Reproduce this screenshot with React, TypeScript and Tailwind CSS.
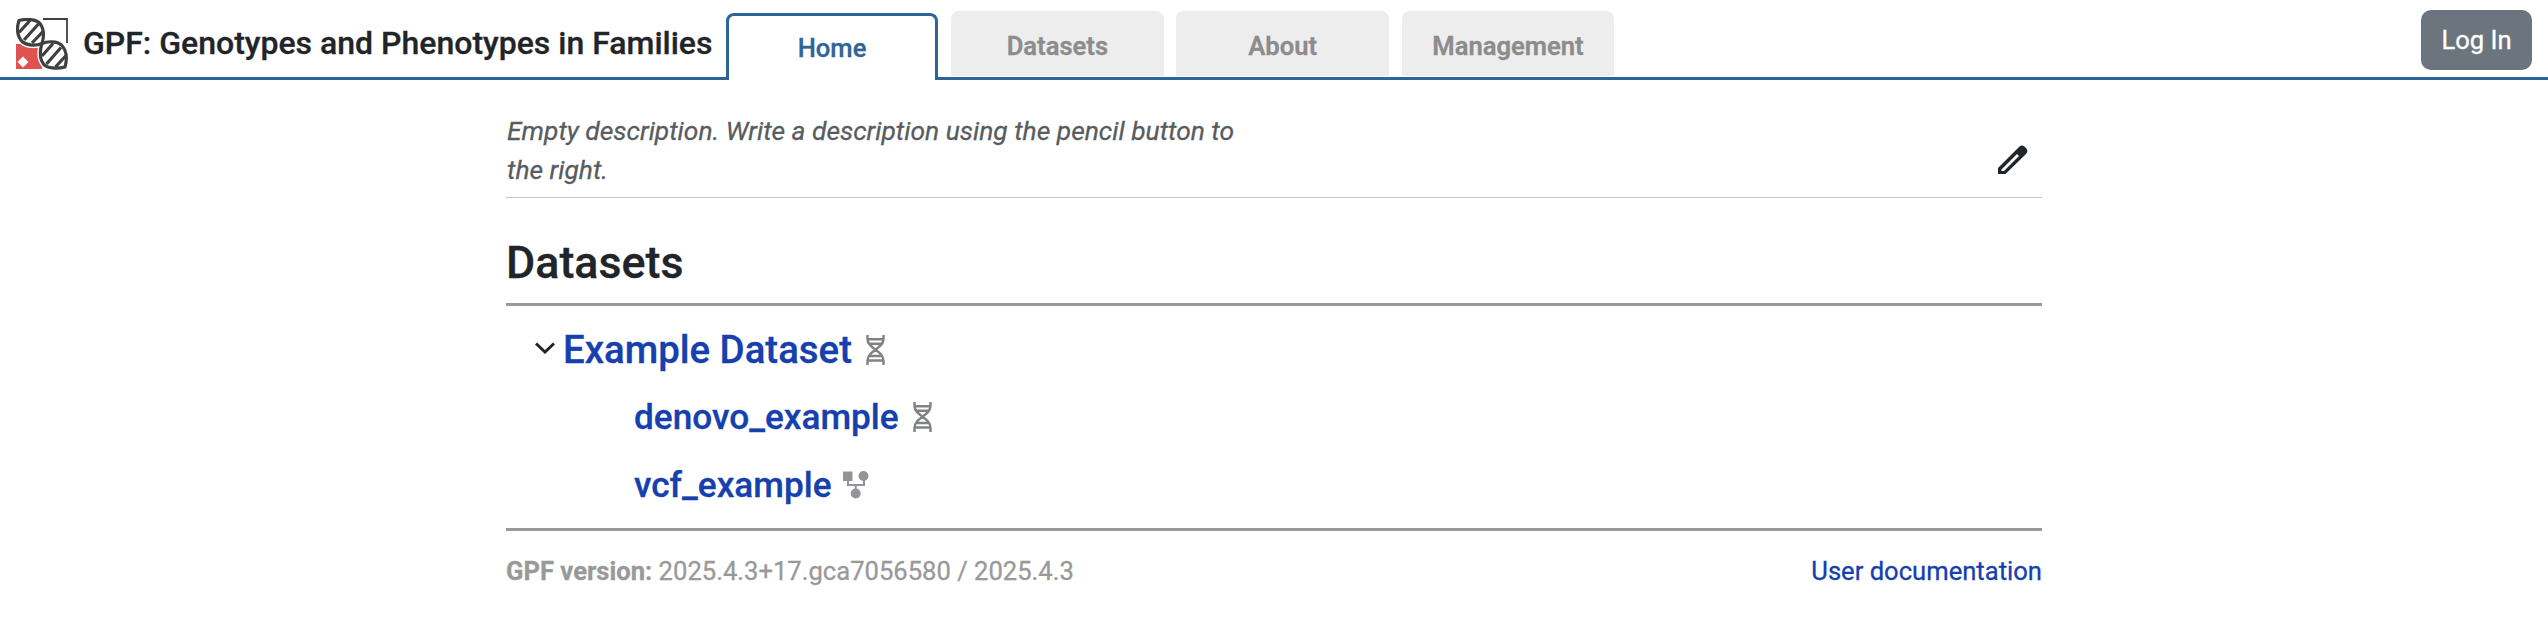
function Logo() {
  return (
    <svg className="size-[52px] shrink-0" viewBox="16 18 52 52" fill="none">
      <path d="M43 19H67V43" stroke="#3f4041" strokeWidth="1.8" />
      <path d="M16 44H42V69H16Z" fill="#e05252" />
      <path d="M23 56.5L28.5 62L23 67.500L17.500 62Z" fill="#fff" />
      <g stroke="#fff" strokeWidth="6" fill="#fff">
        <path d="M19 20.500C26 18.500 36 19 40 23.500C44 29 44 37 42 43.500C36 46 27 46 22 41.500C16.500 35 16.500 28 19 20.500Z" />
        <path d="M42 43.500C48 41 57 41 61.500 45C67 51 67 60 65 67C57 69 47 68.500 43.500 64C39 58 40 50 42 43.500Z" />
      </g>
      <g stroke="#3f4041" strokeWidth="3.2" fill="#fff">
        <path d="M19 20.500C26 18.500 36 19 40 23.500C44 29 44 37 42 43.500C36 46 27 46 22 41.500C16.500 35 16.500 28 19 20.500Z" />
        <path d="M42 43.500C48 41 57 41 61.500 45C67 51 67 60 65 67C57 69 47 68.500 43.500 64C39 58 40 50 42 43.500Z" />
        <path d="M19 32.500L30 20.500M24 40L38.500 24M32 43L43 31.500M42 56L53 43.500M46.500 64L61 47.500M55.500 67L66 55.500" />
      </g>
    </svg>
  );
}

function Dna() {
  return (
    <svg className="h-[30px] w-[19px] shrink-0" viewBox="0 0 19 30" fill="none" stroke="#808284" strokeWidth="2.400">
      <path d="M1.500 0V4C1.500 14 17.500 15 17.500 26V30M17.500 0V4C17.500 14 1.500 15 1.500 26V30M2 4.200H17M3.500 8.700H15.500M3.500 21H15.500M2 25.500H17" />
    </svg>
  );
}

function Pedigree() {
  return (
    <svg className="h-7 w-[26px] shrink-0" viewBox="0 0 26 28" fill="#929497">
      <path d="M0 0.500H9.500V10H0Z" />
      <circle cx="20.500" cy="5" r="5" />
      <circle cx="12.700" cy="22.500" r="5" />
      <path d="M5 8V14H21V8M12.700 14V20" fill="none" stroke="#929497" strokeWidth="2" />
    </svg>
  );
}

const tabs = ["Datasets", "About", "Management"];

export default function App() {
  return (
    <div className="h-[630px] w-full overflow-hidden bg-white font-['Roboto',sans-serif] text-[25.6px] text-[#212529] [-webkit-text-stroke:0.3px]">
      <header className="flex h-20 items-start border-b-[3px] border-[#2f6596]">
        <div className="flex h-[77px] w-[726px] shrink-0 items-start pt-[18px] pl-4">
          <Logo />
          <h1 className="ml-[15px] text-[32px] leading-[50px] font-medium whitespace-nowrap">GPF: Genotypes and Phenotypes in Families</h1>
        </div>
        <nav className="flex items-start">
          <a className="mt-[13px] mr-[13px] h-[67px] w-[212px] rounded-t-lg border-[3px] border-b-0 border-[#2f6596] bg-white text-center leading-[64px] font-medium text-[#2f6596]">Home</a>
          <div className="mt-[11px] flex gap-x-[12.5px]">
            {tabs.map((t) => (
              <a key={t} className="h-[65px] w-[212.8px] rounded-t-lg bg-[#ededed] text-center leading-[70px] font-semibold text-[#8c8c8c]">{t}</a>
            ))}
          </div>
        </nav>
        <button className="mt-[10px] mr-4 ml-auto h-[60px] w-[111px] rounded-[10px] bg-[#6c757d] text-white">Log In</button>
      </header>
      <main className="mx-auto w-[1536px]">
        <section className="flex h-[118px] items-start justify-between border-b border-[#c4c4c4] pt-8">
          <p className="w-[750px] pl-px text-[26.4px] leading-[39px] text-[#585c5f] italic">Empty description. Write a description using the pencil button to the right.</p>
          <svg className="mt-[33px] mr-[14px] h-[30px] w-[30px]" viewBox="0 0 30 30">
            <path d="M0 23L21 2Q24.500 -1 27.500 2.500Q31 6 28 9L7.500 29H0Z" fill="#212529" />
            <path d="M3.500 24.500L19 9L21 11L6 26H3.500Z" fill="#fff" />
          </svg>
        </section>
        <h2 className="h-[108px] border-b-[3px] border-[#999] pt-[38px] text-[44.8px] leading-[54px] font-medium">Datasets</h2>
        <section className="flex h-[225px] flex-col border-b-[3px] border-[#999] pt-[10px] font-medium text-[#1540ad]">
          <div className="flex h-[67px] items-center pl-[29px]">
            <svg className="mt-[-3px] h-3 w-5" viewBox="0 0 20 12" fill="none" stroke="#212529" strokeWidth="3">
              <path d="M1 1.500L10 10L19 1.500" />
            </svg>
            <a className="mr-[14px] ml-2 text-[38.4px] leading-[60px]">Example Dataset</a>
            <Dna />
          </div>
          <div className="flex h-[68px] items-center pl-[128px]">
            <a className="mr-[14px] text-[35.2px] leading-[60px]">denovo_example</a>
            <Dna />
          </div>
          <div className="flex h-[67px] items-center pl-[128px]">
            <a className="mr-[11px] text-[35.2px] leading-[60px]">vcf_example</a>
            <Pedigree />
          </div>
        </section>
        <footer className="flex justify-between pt-[20px] leading-[40px] text-[#999]">
          <p><b>GPF version:</b> 2025.4.3+17.gca7056580 / 2025.4.3</p>
          <a className="text-[#1540ad]">User documentation</a>
        </footer>
      </main>
    </div>
  );
}
